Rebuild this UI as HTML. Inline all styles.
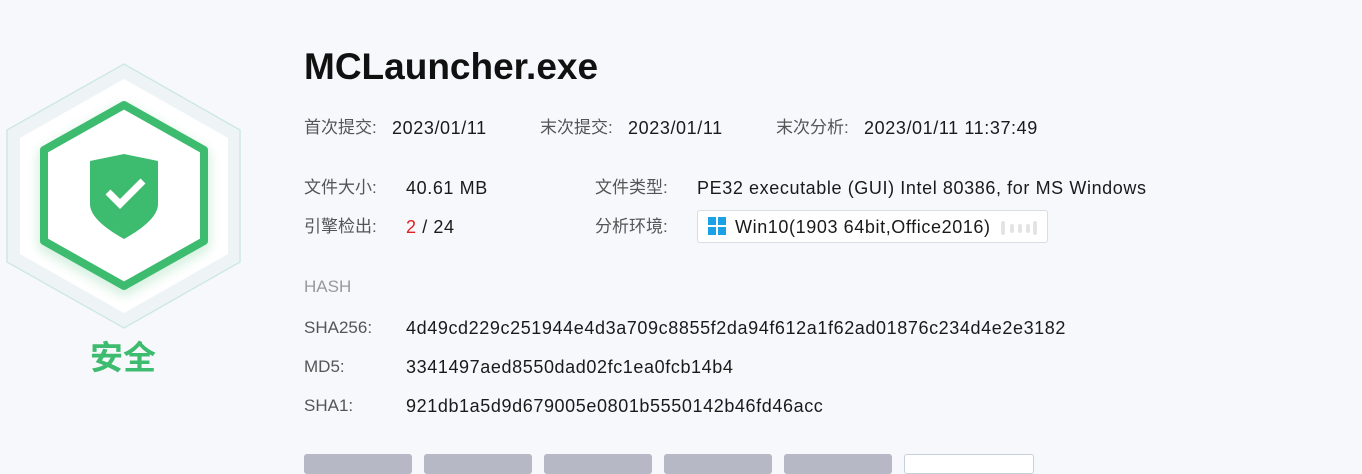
<!DOCTYPE html>
<html><head><meta charset="utf-8"><style>
body{margin:0;width:1362px;height:463px;background:#f7f8fc;font-family:"Liberation Sans","Noto Sans CJK SC",sans-serif;position:relative;overflow:hidden;color:#222}
.t{position:absolute;font-size:17px;white-space:nowrap;line-height:20px}
.v{font-size:18px;letter-spacing:0.6px;color:#1a1a1a}
.l{color:#555}
h1{position:absolute;left:304px;top:44px;margin:0;font-size:37px;font-weight:bold;color:#111;line-height:46px}
.btn{position:absolute;top:454px;width:108px;height:20px;background:#b6b8c5;border-radius:3px}
</style></head><body>
<svg style="position:absolute;left:0;top:55px" width="250" height="285" viewBox="0 55 250 285">
<defs><filter id="g" x="-30%" y="-30%" width="160%" height="160%"><feGaussianBlur stdDeviation="6"/></filter></defs>
<polygon points="124,64 240,130 240,262 124,328 7,262 7,130" fill="#eef4f6" stroke="#cfe9e0" stroke-width="1.5" stroke-linejoin="round"/>
<polygon points="124,79 228,138 228,254 124,313 20,254 20,138" fill="#fff" stroke-linejoin="round"/>
<polygon points="124,110 204,155 204,245 124,290 44,245 44,155" fill="none" stroke="#3dbb6f" stroke-width="8" opacity=".35" filter="url(#g)"/>
<polygon points="124,105 204,150 204,241 124,286 44,241 44,150" fill="#fff" stroke="#3dbb6f" stroke-width="8" stroke-linejoin="round"/>
<path d="M90,161 L124,154 L158,161 L158,204 Q158,220 124,239 Q90,220 90,204 Z" fill="#3dbb6f"/>
<path d="M108,192 L120,204 L143,181" fill="none" stroke="#fff" stroke-width="7"/>
</svg>
<div class="t" style="left:90px;top:338px;font-size:33px;line-height:40px;font-weight:bold;color:#3dbb6f">安全</div>
<h1>MCLauncher.exe</h1>
<div class="t l" style="left:304px;top:118px">首次提交:</div><div class="t v" style="left:392px;top:118px">2023/01/11</div>
<div class="t l" style="left:540px;top:118px">末次提交:</div><div class="t v" style="left:628px;top:118px">2023/01/11</div>
<div class="t l" style="left:776px;top:118px">末次分析:</div><div class="t v" style="left:864px;top:118px">2023/01/11 11:37:49</div>
<div class="t l" style="left:304px;top:178px">文件大小:</div><div class="t v" style="left:406px;top:178px">40.61 MB</div>
<div class="t l" style="left:595px;top:178px">文件类型:</div><div class="t v" style="left:697px;top:178px">PE32 executable (GUI) Intel 80386, for MS Windows</div>
<div class="t l" style="left:304px;top:217px">引擎检出:</div><div class="t v" style="left:406px;top:217px"><span style="color:#e02020">2</span> / 24</div>
<div class="t l" style="left:595px;top:217px">分析环境:</div>
<div style="position:absolute;left:697px;top:210px;width:349px;height:31px;background:#fff;border:1px solid #d9dce3;border-radius:3px"></div>
<svg style="position:absolute;left:708px;top:217px" width="18" height="18"><rect x="0" y="0" width="8" height="8" fill="#1da1e6"/><rect x="10" y="0" width="8" height="8" fill="#1da1e6"/><rect x="0" y="10" width="8" height="8" fill="#1da1e6"/><rect x="10" y="10" width="8" height="8" fill="#1da1e6"/></svg>
<div class="t v" style="left:735px;top:217px">Win10(1903 64bit,Office2016)</div>
<svg style="position:absolute;left:1001px;top:221px" width="36" height="14"><rect x="0" y="0" width="4" height="14" rx="2" fill="#e4e4e4"/><rect x="9" y="3" width="4" height="9" rx="2" fill="#e4e4e4"/><rect x="17" y="3" width="4" height="9" rx="2" fill="#e4e4e4"/><rect x="25" y="3" width="4" height="9" rx="2" fill="#e4e4e4"/><rect x="32" y="0" width="4" height="14" rx="2" fill="#e4e4e4"/></svg>
<div class="t" style="left:304px;top:277px;color:#999">HASH</div>
<div class="t l" style="left:304px;top:318px">SHA256:</div><div class="t v" style="left:406px;top:318px">4d49cd229c251944e4d3a709c8855f2da94f612a1f62ad01876c234d4e2e3182</div>
<div class="t l" style="left:304px;top:357px">MD5:</div><div class="t v" style="left:406px;top:357px">3341497aed8550dad02fc1ea0fcb14b4</div>
<div class="t l" style="left:304px;top:396px">SHA1:</div><div class="t v" style="left:406px;top:396px">921db1a5d9d679005e0801b5550142b46fd46acc</div>
<div class="btn" style="left:304px"></div><div class="btn" style="left:424px"></div><div class="btn" style="left:544px"></div><div class="btn" style="left:664px"></div><div class="btn" style="left:784px"></div>
<div class="btn" style="left:904px;width:130px;background:#fff;border:1px solid #c8d0dc;box-sizing:border-box"></div>
</body></html>
